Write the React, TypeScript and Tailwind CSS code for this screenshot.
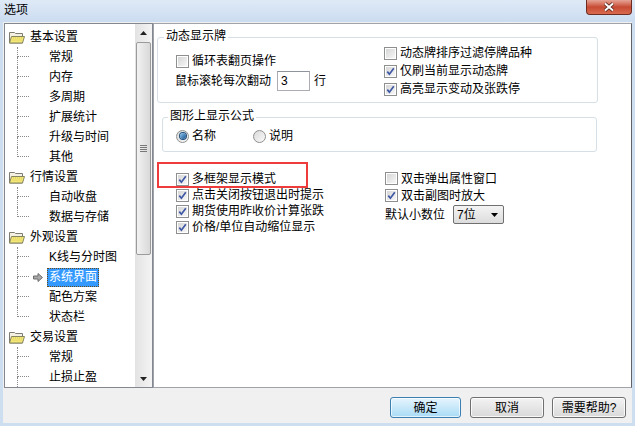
import React from "react";

const font = "font-['Liberation_Sans','Noto_Sans_CJK_SC',sans-serif]";

type Group = { label: string; items: string[]; more?: boolean };

const groups: Group[] = [
  { label: "基本设置", items: ["常规", "内存", "多周期", "扩展统计", "升级与时间", "其他"] },
  { label: "行情设置", items: ["自动收盘", "数据与存储"] },
  { label: "外观设置", items: ["K线与分时图", "系统界面", "配色方案", "状态栏"] },
  { label: "交易设置", items: ["常规", "止损止盈"], more: true },
];

const FolderIcon = () => (
  <svg width="16" height="13" viewBox="0 0 16 13">
    <path d="M0.5 1.5 h5 l1 1 h7 v9.5 h-13 z" fill="#f4f1e2" stroke="#7c7c70" />
    <path d="M2.5 5.5 h13 l-2 6.5 h-13 z" fill="#f3e77a" stroke="#858560" />
    <path d="M4 7 h9 M3.5 9 h9" stroke="#d8c850" strokeDasharray="1 1" />
  </svg>
);

const Arrow = () => (
  <svg width="10" height="9" viewBox="0 0 10 9">
    <path d="M0.5 3 h4.5 v-2.5 l4.5 4 l-4.5 4 v-2.5 h-4.5 z" fill="#a8a8a8" stroke="#6d6d6d" />
  </svg>
);

// checkbox in the old windows look
const Check = ({ on }: { on?: boolean }) => (
  <span className="flex h-[13px] w-[13px] shrink-0 border border-[#8e8f8f] bg-white p-[1px]">
    <span className="flex flex-1 items-center justify-center bg-linear-to-br from-[#d6d6d6] to-[#f7f7f7]">
      {on && (
        <svg width="9" height="9" viewBox="0 0 9 9">
          <path d="M1.3 4.6 L3.4 7.2 L7.8 1.2" fill="none" stroke="#3f58a5" strokeWidth="1.7" />
        </svg>
      )}
    </span>
  </span>
);

const Radio = ({ on }: { on?: boolean }) => (
  <span className="flex h-[13px] w-[13px] shrink-0 items-center justify-center rounded-full border border-[#8e8f8f] bg-linear-to-br from-[#d9d9d9] to-[#fafafa]">
    {on && <span className="h-[6px] w-[6px] rounded-full bg-linear-to-br from-[#8cc8f0] to-[#14508c] ring-1 ring-[#1d4e7c]" />}
  </span>
);

const CheckRow = ({ on, label, h = "h-[16px]" }: { on?: boolean; label: string; h?: string }) => (
  <div className={`flex items-center ${h}`}>
    <Check on={on} />
    <span className="ml-[3px] whitespace-nowrap">{label}</span>
  </div>
);

const Tree = () => (
  <div className="flex h-full w-[149px] border border-[#828790] bg-white">
    <div className="flex-1 overflow-hidden pt-[3px]">
      {groups.map((g) => (
        <div key={g.label}>
          <div className="flex h-[20px] items-center pl-[4px]">
            <FolderIcon />
            <span className="ml-[5px] whitespace-nowrap">{g.label}</span>
          </div>
          <div className="pl-[12px]">
            {g.items.map((it, i) => {
              const last = i === g.items.length - 1 && !g.more;
              const sel = it === "系统界面";
              return (
                <div key={it + i} className="flex h-[20px] items-center">
                  <div className="flex h-full w-[12px] flex-col">
                    <div className="h-[10px] border-b border-l border-dotted border-[#8a8a8a]" />
                    <div className={last ? "flex-1" : "flex-1 border-l border-dotted border-[#8a8a8a]"} />
                  </div>
                  <div className="flex w-[18px] justify-center">{sel && <Arrow />}</div>
                  <span
                    className={
                      sel
                        ? "whitespace-nowrap border border-dotted border-[#6b4a1a] bg-[#3399ff] px-[1px] leading-[17px] text-white"
                        : "whitespace-nowrap border border-transparent px-[1px] leading-[17px]"
                    }
                  >
                    {it}
                  </span>
                </div>
              );
            })}
          </div>
        </div>
      ))}
    </div>
    {/* scrollbar */}
    <div className="flex w-[17px] flex-col bg-linear-to-r from-[#e3e3e3] to-[#f4f4f4]">
      <div className="flex h-[17px] items-center justify-center">
        <svg width="7" height="4" viewBox="0 0 7 4">
          <path d="M3.5 0 L7 4 H0 Z" fill="#222" />
        </svg>
      </div>
      <div className="flex-1">
        <div className="mx-[1px] mt-[1px] flex h-[213px] items-center justify-center rounded-[2px] border border-[#9b9b9b] bg-linear-to-r from-[#f2f2f2] to-[#d9d9d9]">
          <div className="flex flex-col gap-[1px]">
            <span className="h-[1px] w-[7px] bg-[#777]" />
            <span className="h-[1px] w-[7px] bg-[#777]" />
            <span className="h-[1px] w-[7px] bg-[#777]" />
            <span className="h-[1px] w-[7px] bg-[#777]" />
          </div>
        </div>
      </div>
      <div className="flex h-[17px] items-center justify-center">
        <svg width="7" height="4" viewBox="0 0 7 4">
          <path d="M0 0 H7 L3.5 4 Z" fill="#222" />
        </svg>
      </div>
    </div>
  </div>
);

const Btn = ({ label, w, primary }: { label: string; w: string; primary?: boolean }) => (
  <div
    className={
      primary
        ? `${w} flex h-[21px] items-center justify-center rounded-[3px] border border-[#3c7fb1] bg-linear-to-b from-[#e6f5fd] to-[#a9dbf6] shadow-[inset_0_0_0_1px_#ffffffaa]`
        : `${w} flex h-[21px] items-center justify-center rounded-[3px] border border-[#707070] bg-linear-to-b from-[#f3f3f3] to-[#d9d9d9] shadow-[inset_0_0_0_1px_#ffffffcc]`
    }
  >
    {label}
  </div>
);

export default function App() {
  return (
    <div className={`${font} flex h-[426px] w-[635px] flex-col bg-[#cddef1] text-[12px] leading-[16px] text-black`}>
      {/* title bar */}
      <div className="flex h-[22px] items-start justify-between bg-linear-to-b from-[#dfeaf7] to-[#cbdcf0] pl-[4px] pr-[3px]">
        <span className="mt-[2px] text-[12px] leading-[16px]">选项</span>
        <div className="flex h-[15px] w-[46px] items-center justify-center rounded-b-[4px] border border-t-0 border-[#6e2b20] bg-linear-to-b from-[#e5a497] via-[#c74a33] to-[#d86a4f]">
          <svg width="12" height="10" viewBox="0 0 12 10">
            <path d="M2 1.5 L10 8.5 M10 1.5 L2 8.5" stroke="#4a2018" strokeWidth="3.6" />
            <path d="M2 1.5 L10 8.5 M10 1.5 L2 8.5" stroke="#fff" strokeWidth="2" />
          </svg>
        </div>
      </div>

      <div className="mx-[3px] mb-[3px] flex flex-1 flex-col bg-[#f0f0f0]">
        <div className="mt-[1px] flex h-[365px] pl-[1px]">
          <Tree />

          {/* settings page */}
          <div className="relative flex-1 border border-r-[#5f6368] border-[#a0a4aa] bg-white">
            {/* 动态显示牌 */}
            <div className="ml-[3px] mt-[13px] h-[66px] w-[441px] rounded-[3px] border border-[#d5dfe5]">
              <div className="-mt-[10px] ml-[6px] w-fit bg-white px-[2px]">动态显示牌</div>
              <div className="flex">
                <div className="w-[226px] pl-[18px] pt-[8px]">
                  <CheckRow label="循环表翻页操作" h="h-[18px]" />
                  <div className="mt-[1px] flex h-[20px] items-center">
                    <span className="-ml-[1px] whitespace-nowrap">鼠标滚轮每次翻动</span>
                    <div className="ml-[6px] flex h-[20px] w-[33px] items-center border border-[#abadb3] border-t-[#8f939b] pl-[3px]">3</div>
                    <span className="ml-[4px]">行</span>
                  </div>
                </div>
                <div>
                  <CheckRow label="动态牌排序过滤停牌品种" h="h-[18px]" />
                  <CheckRow on label="仅刷当前显示动态牌" h="h-[18px]" />
                  <CheckRow on label="高亮显示变动及张跌停" h="h-[18px]" />
                </div>
              </div>
            </div>

            {/* 图形上显示公式 */}
            <div className="ml-[8px] mt-[14px] h-[35px] w-[435px] rounded-[3px] border border-[#d5dfe5]">
              <div className="-mt-[10px] ml-[5px] w-fit bg-white px-[2px]">图形上显示公式</div>
              <div className="mt-[4px] flex h-[16px] items-center pl-[13px]">
                <div className="flex w-[77px] items-center">
                  <Radio on />
                  <span className="ml-[3px]">名称</span>
                </div>
                <div className="flex items-center">
                  <Radio />
                  <span className="ml-[3px]">说明</span>
                </div>
              </div>
            </div>

            {/* general options */}
            <div className="flex">
              <div className="w-[231px] pl-[22px] pt-[19px]">
                <CheckRow on label="多框架显示模式" />
                <CheckRow on label="点击关闭按钮退出时提示" />
                <CheckRow on label="期货使用昨收价计算张跌" />
                <CheckRow on label="价格/单位自动缩位显示" />
              </div>
              <div className="pt-[18px]">
                <CheckRow label="双击弹出属性窗口" h="h-[17px]" />
                <CheckRow on label="双击副图时放大" h="h-[17px]" />
                <div className="mt-[1px] flex h-[19px] items-center">
                  <span>默认小数位</span>
                  <div className="ml-[8px] flex h-[19px] w-[51px] items-center justify-between rounded-[2px] border border-[#707070] bg-linear-to-b from-[#f4f4f4] to-[#dcdcdc] pl-[3px] pr-[5px]">
                    <span>7位</span>
                    <svg width="7" height="4" viewBox="0 0 7 4">
                      <path d="M0 0 H7 L3.5 4 Z" fill="#000" />
                    </svg>
                  </div>
                </div>
              </div>
            </div>

            {/* highlight mark */}
            <div className="absolute left-[3px] top-[138px] h-[26px] w-[151px] border-2 border-[#ee3b3b]" />
          </div>
        </div>

        <div className="flex flex-1 items-start justify-end pr-[6px] pt-[9px]">
          <Btn label="确定" w="w-[71px]" primary />
          <div className="w-[9px]" />
          <Btn label="取消" w="w-[74px]" />
          <div className="w-[8px]" />
          <Btn label="需要帮助?" w="w-[74px]" />
        </div>
      </div>
    </div>
  );
}
